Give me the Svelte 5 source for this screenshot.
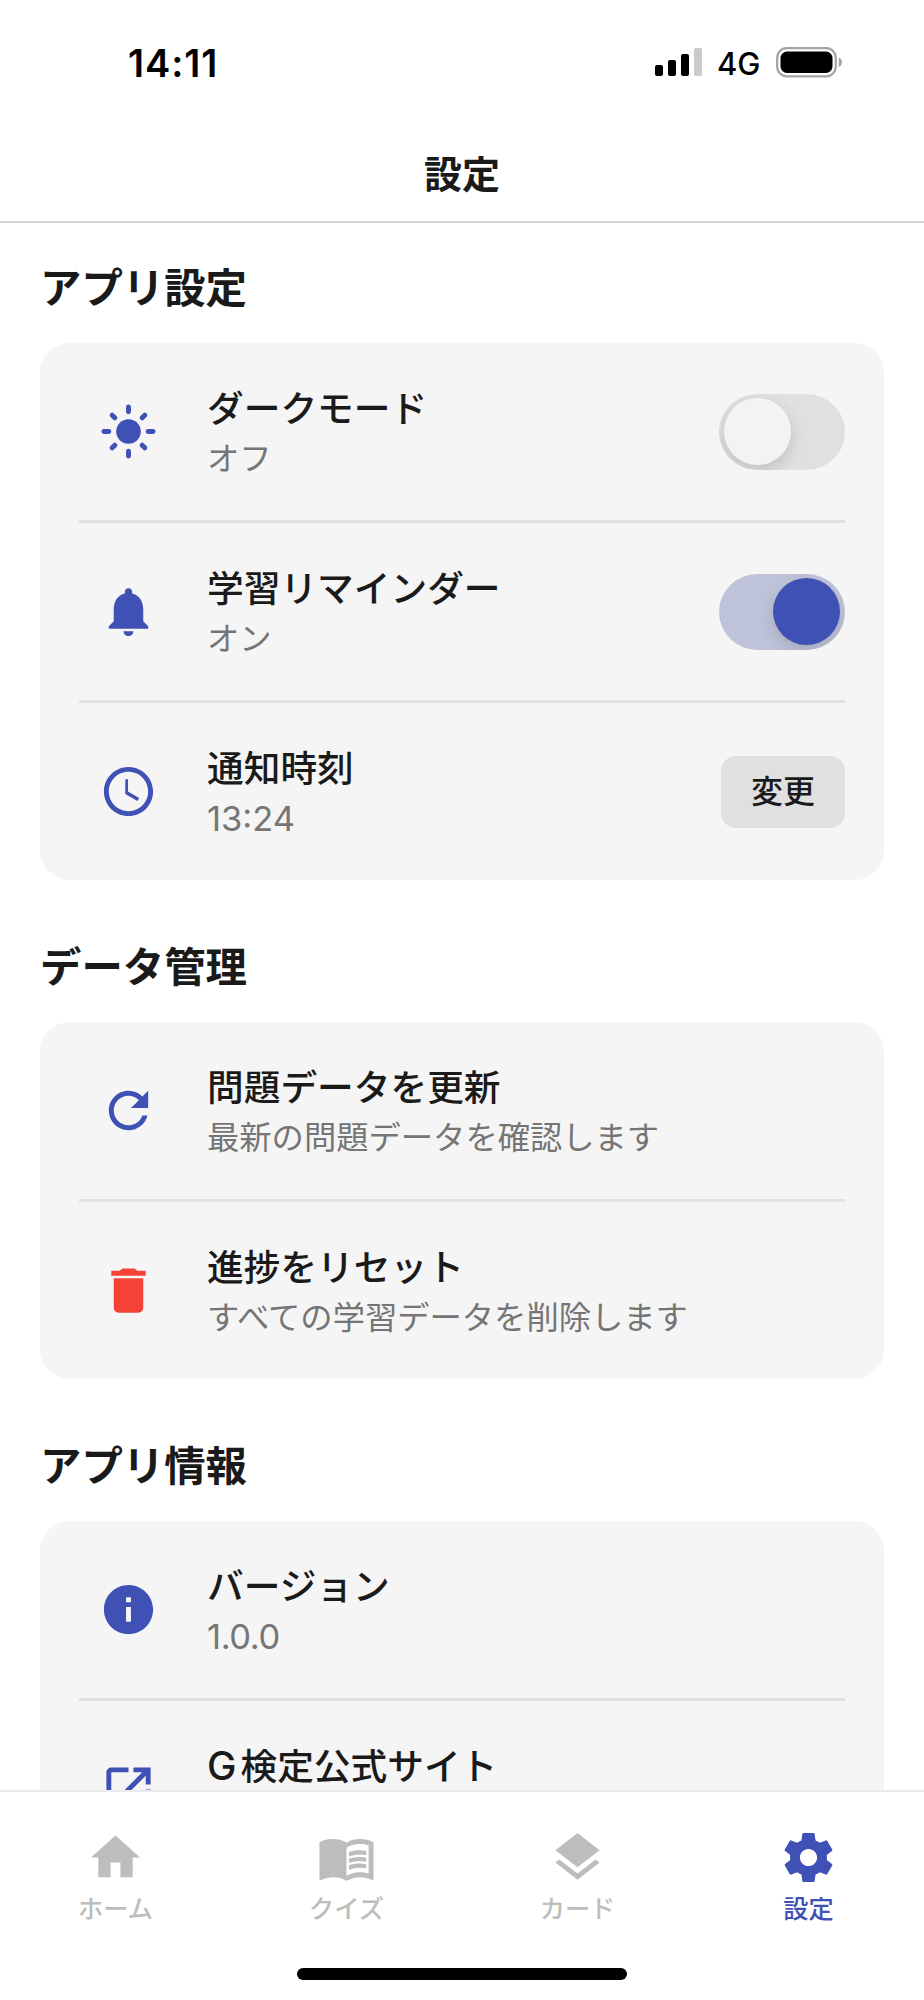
<script>
	let darkMode = $state(false);
	let reminder = $state(true);
	let activeTab = $state('settings');

	const tabs = [
		{ id: 'home', label: 'ホーム', icon: 'home' },
		{ id: 'quiz', label: 'クイズ', icon: 'book' },
		{ id: 'cards', label: 'カード', icon: 'layers' },
		{ id: 'settings', label: '設定', icon: 'gear' }
	];

	// Material icons, 24x24
	const icons = {
		bell: 'M12 22c1.1 0 2-.9 2-2h-4c0 1.1.89 2 2 2zm6-6v-5c0-3.07-1.64-5.64-4.5-6.32V4c0-.83-.67-1.5-1.5-1.5s-1.5.67-1.5 1.5v.68C7.63 5.36 6 7.92 6 11v5l-2 2v1h16v-1l-2-2z',
		clock: 'M11.99 2C6.47 2 2 6.48 2 12s4.47 10 9.99 10C17.52 22 22 17.52 22 12S17.52 2 11.99 2zM12 20c-4.42 0-8-3.58-8-8s3.58-8 8-8 8 3.58 8 8-3.58 8-8 8zm-.2-13h-1.1v6l4.9 2.9.75-1.23-4.55-2.67z',
		refresh: 'M17.65 6.35C16.2 4.9 14.21 4 12 4c-4.42 0-7.99 3.58-7.99 8s3.57 8 7.99 8c3.73 0 6.84-2.55 7.73-6h-2.08c-.82 2.33-3.04 4-5.65 4-3.31 0-6-2.69-6-6s2.69-6 6-6c1.66 0 3.14.69 4.22 1.78L13 11h7V4l-2.35 2.35z',
		trash: 'M6 19c0 1.1.9 2 2 2h8c1.1 0 2-.9 2-2V7H6v12zM19 4h-3.5l-1-1h-5l-1 1H5v2h14V4z',
		info: 'M12 2C6.48 2 2 6.48 2 12s4.48 10 10 10 10-4.48 10-10S17.52 2 12 2zm1 15h-2v-6h2v6zm0-8h-2V7h2v2z',
		open: 'M19 19H5V5h7V3H5c-1.11 0-2 .9-2 2v14c0 1.1.89 2 2 2h14c1.1 0 2-.9 2-2v-7h-2v7zM14 3v2h3.59l-9.83 9.83 1.41 1.41L19 6.41V10h2V3h-7z',
		home: 'M10 20v-6h4v6h5v-8h3L12 3 2 12h3v8z',
		book: 'M12 6C10.5 4.9 8.45 4.5 6.5 4.5S2.45 4.9 1 5.9v15c0 .25.3.4.55.3C3.1 20.4 5 20 6.5 20c1.95 0 4.05.4 5.5 1.5 1.35-.85 3.8-1.5 5.5-1.5 1.6 0 3.4.3 4.95 1.2.25.1.55-.05.55-.3v-15C21.5 4.9 19.45 4.5 17.5 4.5S13.5 4.9 12 6zm9 12.5c-1.1-.35-2.3-.5-3.5-.5-1.7 0-4.15.65-5.5 1.5V8c1.35-.85 3.8-1.5 5.5-1.5 1.2 0 2.4.15 3.5.5v11.5z M13 9.8c2-.8 4.8-.95 7-.5v1.7c-2.4-.5-5-.25-7 .55z M13 12.5c2-.8 4.8-.95 7-.5v1.7c-2.4-.5-5-.25-7 .55z M13 15.2c2-.8 4.8-.95 7-.5v1.7c-2.4-.5-5-.25-7 .55z',
		layers: 'M11.99 18.54l-7.37-5.73L3 14.07l9 7 9-7-1.63-1.27-7.38 5.74zM12 16l7.36-5.73L21 9l-9-7-9 7 1.63 1.27L12 16z',
		gear: 'M19.43 12.98c.04-.32.07-.64.07-.98s-.03-.66-.07-.98l2.11-1.65c.19-.15.24-.42.12-.64l-2-3.46c-.12-.22-.39-.3-.61-.22l-2.49 1c-.52-.4-1.08-.73-1.69-.98l-.38-2.65C14.46 2.18 14.25 2 14 2h-4c-.25 0-.46.18-.49.42l-.38 2.65c-.61.25-1.17.59-1.69.98l-2.49-1c-.23-.09-.49 0-.61.22l-2 3.46c-.13.22-.07.49.12.64l2.11 1.65c-.04.32-.07.65-.07.98s.03.66.07.98l-2.11 1.65c-.19.15-.24.42-.12.64l2 3.46c.12.22.39.3.61.22l2.49-1c.52.4 1.08.73 1.69.98l.38 2.65c.03.24.24.42.49.42h4c.25 0 .46-.18.49-.42l.38-2.65c.61-.25 1.17-.59 1.69-.98l2.49 1c.23.09.49 0 .61-.22l2-3.46c.12-.22.07-.49-.12-.64l-2.11-1.65zM12 15.5c-1.93 0-3.5-1.57-3.5-3.5s1.57-3.5 3.5-3.5 3.5 1.57 3.5 3.5-1.57 3.5-3.5 3.5z'
	};
</script>

{#snippet icon(name)}
	<svg class="icon" viewBox="0 0 24 24" aria-hidden="true">
		{#if name === 'sun'}
			<circle cx="12" cy="12" r="5" fill="currentColor" />
			<path
				d="M12 2v2M12 20v2M2 12h2M20 12h2M5.35 5.35l1.1 1.1M17.55 17.55l1.1 1.1M18.65 5.35l-1.1 1.1M6.45 17.55l-1.1 1.1"
				fill="none"
				stroke="currentColor"
				stroke-width="2"
				stroke-linecap="round"
			/>
		{:else}
			<path d={icons[name]} fill="currentColor" fill-rule="evenodd" />
		{/if}
	</svg>
{/snippet}

<div class="screen">
	<div class="status-bar">
		<span class="time">14:11</span>
		<div class="status-icons">
			<div class="signal">
				<i class="bar b1"></i>
				<i class="bar b2"></i>
				<i class="bar b3"></i>
				<i class="bar b4"></i>
			</div>
			<span class="network">4G</span>
			<svg class="battery" width="67" height="31" viewBox="0 0 67 31">
				<rect x="1.2" y="1.2" width="58.6" height="28.1" rx="9.5" fill="none" stroke="#a3a3a3" stroke-width="2.2" />
				<rect x="4.5" y="4.5" width="52" height="21.5" rx="6.5" fill="#000" />
				<path d="M62.8 10.5c4.2 1.4 4.2 8.2 0 9.6z" fill="#a3a3a3" />
			</svg>
		</div>
	</div>

	<header>
		<h1>設定</h1>
	</header>

	<main>
		<section>
			<h2>アプリ設定</h2>
			<div class="card">
				<div class="row">
					<span class="row-icon">{@render icon('sun')}</span>
					<div class="row-text">
						<p class="title">ダークモード</p>
						<p class="sub">{darkMode ? 'オン' : 'オフ'}</p>
					</div>
					<button class="switch" class:on={darkMode} onclick={() => (darkMode = !darkMode)} aria-label="ダークモード">
						<span class="knob"></span>
					</button>
				</div>
				<div class="row">
					<span class="row-icon">{@render icon('bell')}</span>
					<div class="row-text">
						<p class="title">学習リマインダー</p>
						<p class="sub">{reminder ? 'オン' : 'オフ'}</p>
					</div>
					<button class="switch" class:on={reminder} onclick={() => (reminder = !reminder)} aria-label="学習リマインダー">
						<span class="knob"></span>
					</button>
				</div>
				<div class="row">
					<span class="row-icon">{@render icon('clock')}</span>
					<div class="row-text">
						<p class="title">通知時刻</p>
						<p class="sub latin">13:24</p>
					</div>
					<button class="btn-change">変更</button>
				</div>
			</div>
		</section>

		<section>
			<h2>データ管理</h2>
			<div class="card">
				<div class="row">
					<span class="row-icon">{@render icon('refresh')}</span>
					<div class="row-text">
						<p class="title">問題データを更新</p>
						<p class="sub">最新の問題データを確認します</p>
					</div>
				</div>
				<div class="row">
					<span class="row-icon danger">{@render icon('trash')}</span>
					<div class="row-text">
						<p class="title">進捗をリセット</p>
						<p class="sub">すべての学習データを削除します</p>
					</div>
				</div>
			</div>
		</section>

		<section>
			<h2>アプリ情報</h2>
			<div class="card">
				<div class="row">
					<span class="row-icon">{@render icon('info')}</span>
					<div class="row-text">
						<p class="title">バージョン</p>
						<p class="sub version">1.0.0</p>
					</div>
				</div>
				<div class="row">
					<span class="row-icon">{@render icon('open')}</span>
					<div class="row-text">
						<p class="title"><span class="letter">G</span>検定公式サイト</p>
						<p class="sub"></p>
					</div>
				</div>
			</div>
		</section>
	</main>

	<nav>
		<div class="tabs">
			{#each tabs as tab}
				<button class="tab" class:active={activeTab === tab.id} onclick={() => (activeTab = tab.id)}>
					{@render icon(tab.icon)}
					<span>{tab.label}</span>
				</button>
			{/each}
		</div>
		<div class="home-indicator"></div>
	</nav>
</div>

<style>
	:global(body) {
		margin: 0;
		background: #fff;
	}

	.screen {
		display: flex;
		flex-direction: column;
		width: 924px;
		height: 2000px;
		overflow: hidden;
		background: #fff;
		color: #1a1a1a;
		font-family: Inter, 'Noto Sans CJK JP', sans-serif;
	}

	h1,
	h2,
	p {
		margin: 0;
	}

	button {
		padding: 0;
		border: none;
		font-family: inherit;
		cursor: pointer;
	}

	.icon {
		display: block;
		width: 59px;
		height: 59px;
	}

	/* Status bar */
	.status-bar {
		display: flex;
		justify-content: space-between;
		height: 124px;
		padding: 0 81px 0 128px;
		box-sizing: border-box;
		flex-shrink: 0;
		color: #000;
	}

	.time {
		margin-top: 41px;
		font-size: 38px;
		font-weight: 600;
		line-height: 44px;
		letter-spacing: 0.9px;
	}

	.status-icons {
		display: flex;
		align-items: flex-start;
	}

	.signal {
		display: flex;
		align-items: flex-end;
		gap: 5px;
		height: 28px;
		margin-top: 48px;
	}

	.bar {
		width: 8px;
		border-radius: 2px;
		background: #000;
	}

	.b1 {
		height: 11px;
	}

	.b2 {
		height: 16px;
	}

	.b3 {
		height: 22px;
	}

	.b4 {
		height: 28px;
		background: #cbcbcb;
	}

	.network {
		width: 59px;
		margin: 44px 0 0 15px;
		font-size: 31px;
		font-weight: 500;
		line-height: 40px;
	}

	.battery {
		margin-top: 47px;
	}

	/* Header */
	header {
		display: flex;
		justify-content: center;
		height: 99px;
		padding-top: 23px;
		box-sizing: border-box;
		flex-shrink: 0;
		border-bottom: 2px solid #d2d2d3;
	}

	h1 {
		font-size: 38px;
		font-weight: 700;
		line-height: 54px;
	}

	/* Settings list */
	main {
		flex: 1;
		min-height: 0;
		padding: 38px 40px 0;
		overflow: hidden;
	}

	section {
		margin-bottom: 59px;
	}

	h2 {
		margin-bottom: 28px;
		padding-top: 1px;
		font-size: 41.4px;
		font-weight: 700;
		line-height: 54px;
	}

	section:first-child h2 {
		padding-top: 0;
	}

	.card {
		padding: 0 39px;
		border-radius: 29.5px;
		background: #f5f5f5;
	}

	.row {
		display: flex;
		align-items: center;
		height: 177px;
	}

	.row + .row {
		border-top: 3px solid #e2e2e2;
	}

	.row-icon {
		display: flex;
		justify-content: center;
		width: 98px;
		margin-right: 30px;
		color: #3f51b5;
	}

	.row-icon.danger {
		color: #f44336;
	}

	.row-text {
		flex: 1;
		padding-top: 3px;
	}

	.title {
		font-size: 36.7px;
		font-weight: 500;
		line-height: 52px;
		white-space: nowrap;
	}

	.letter {
		margin-right: 4px;
		font-size: 39.4px;
		line-height: 1;
	}

	.sub {
		min-height: 48px;
		color: #757575;
		font-size: 32.3px;
		line-height: 48px;
		white-space: nowrap;
	}

	.sub.latin {
		font-size: 34.5px;
	}

	.sub.version {
		font-size: 34.5px;
		letter-spacing: -0.4px;
	}

	.switch {
		display: flex;
		align-items: center;
		width: 126px;
		height: 76px;
		padding: 0 5px;
		border-radius: 38px;
		background: #e0e0e1;
		overflow: hidden;
	}

	.knob {
		width: 67px;
		height: 67px;
		border-radius: 50%;
		background: #f4f3f4;
		box-shadow: 0 6px 16px rgba(0, 0, 0, 0.14);
	}

	.switch.on {
		justify-content: flex-end;
		background: #bfc3d9;
	}

	.switch.on .knob {
		background: #3f51b5;
	}

	.btn-change {
		width: 124px;
		height: 72px;
		border-radius: 15px;
		background: #e0e0e0;
		color: #1a1a1a;
		font-size: 32px;
		font-weight: 500;
		line-height: 48px;
	}

	/* Bottom tabs */
	nav {
		display: flex;
		flex-direction: column;
		align-items: center;
		height: 210px;
		box-sizing: border-box;
		flex-shrink: 0;
		border-top: 2px solid #ebebeb;
		background: #fff;
	}

	.tabs {
		display: grid;
		grid-template-columns: repeat(4, 1fr);
		width: 100%;
		height: 176px;
	}

	.tab {
		display: flex;
		flex-direction: column;
		align-items: center;
		padding-top: 36px;
		background: none;
		color: #bdbdbd;
		font-size: 25.2px;
		font-weight: 500;
		line-height: 36px;
	}

	.tab span {
		margin-top: 4px;
	}

	.tab.active {
		color: #3f51b5;
	}

	.home-indicator {
		width: 330px;
		height: 12px;
		border-radius: 6px;
		background: #000;
	}
</style>
